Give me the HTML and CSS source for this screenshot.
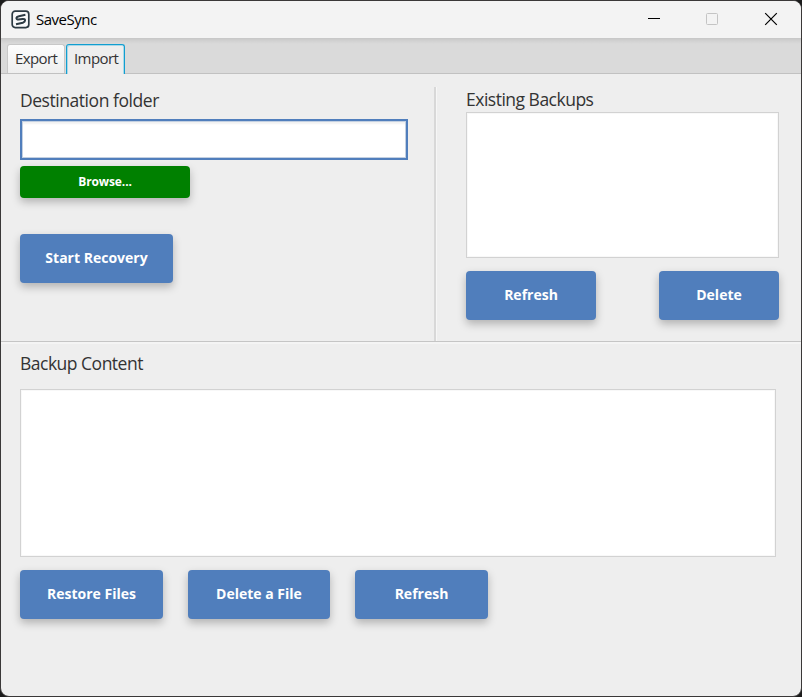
FILE: index.html
```html
<!DOCTYPE html>
<html lang="en">
<head>
<meta charset="utf-8">
<title>SaveSync</title>
<link rel="stylesheet" href="styles.css">
</head>
<body>
<div class="window">
  <header class="titlebar">
    <svg class="logo" width="20" height="20" viewBox="0 0 20 20" fill="none" stroke="#2c3a43">
      <rect x="1.2" y="1.2" width="16.6" height="16.4" rx="3" stroke-width="1.7" fill="#f8f9fa"/>
      <path d="M14.4 4.8 8 6.2C4.6 7 4.6 9.6 7.6 9.5l4-.6c3.2-.3 3.3 2.6.2 3.8L5 14.3" stroke-width="2"/>
    </svg>
    <span class="title"><span class="t-app">SaveSync</span></span>
    <div class="controls">
      <svg width="14" height="14" viewBox="0 0 14 14"><path d="M1 6.5h12" stroke="#000"/></svg>
      <svg width="14" height="14" viewBox="0 0 14 14"><rect x="1.5" y="1.5" width="11" height="11" rx="1" fill="none" stroke="#c4c4c4"/></svg>
      <svg width="14" height="14" viewBox="0 0 14 14"><path d="M1.2 1.2l11.6 11.6M12.8 1.2L1.2 12.8" stroke="#000" stroke-width="1.2"/></svg>
    </div>
  </header>
  <nav class="tabs">
    <div class="tab"><span class="t-export">Export</span></div>
    <div class="tab active"><span class="t-import">Import</span></div>
  </nav>
  <main>
    <div class="top">
      <section class="recovery">
        <h2><span class="t-dest">Destination folder</span></h2>
        <input class="field" type="text" aria-label="Destination folder">
        <button class="btn browse"><span class="t-browse">Browse...</span></button>
        <button class="btn start"><span class="t-start">Start Recovery</span></button>
      </section>
      <section class="backups">
        <h2><span class="t-exist">Existing Backups</span></h2>
        <div class="list"></div>
        <div class="row">
          <button class="btn w130"><span class="t-refresh">Refresh</span></button>
          <button class="btn w120"><span class="t-delete">Delete</span></button>
        </div>
      </section>
    </div>
    <section class="content">
      <h2><span class="t-content">Backup Content</span></h2>
      <div class="list"></div>
      <div class="row">
        <button class="btn w143"><span class="t-restore">Restore Files</span></button>
        <button class="btn w142"><span class="t-file">Delete a File</span></button>
        <button class="btn w133"><span class="t-refresh">Refresh</span></button>
      </div>
    </section>
  </main>
</div>
</body>
</html>
```
FILE: styles.css
```css
* { box-sizing: border-box; }
body {
  margin: 0;
  background: #1c1c1c;
  font-family: "Open Sans", "Noto Sans", sans-serif;
  color: #333;
}
.window {
  width: 802px;
  height: 697px;
  border: 1px solid #3a3838;
  border-radius: 9px;
  background: #eeeeee;
  overflow: hidden;
}
.titlebar {
  height: 37px;
  display: flex;
  align-items: center;
  padding: 0 23px 1px 10px;
  background: #f3f3f3;
}
.logo { margin-right: 5px; margin-top: 1px; }
.title { font-size: 15px; color: #000; line-height: 20px; margin-top: -1px; }
.controls { margin-left: auto; display: flex; gap: 44px; }
.controls svg { display: block; }
.controls svg:last-child { margin-left: 1px; }
.tabs {
  height: 36px;
  display: flex;
  align-items: flex-end;
  gap: 1px;
  padding-left: 6px;
  background: linear-gradient(#c6c6c6 0, #d2d2d2 3px, #dadada 6px);
  border-bottom: 1px solid #c1c1c1;
}
.tab {
  width: 58px;
  height: 29px;
  border: 1px solid #c8c8c8;
  border-bottom: 0;
  border-radius: 3px 3px 0 0;
  background: linear-gradient(#fdfdfd, #eeeeee);
  font-size: 15px;
  line-height: 27px;
  padding-left: 7px;
}
.tab.active {
  height: 30px;
  width: 59px;
  margin-bottom: -1px;
  border: 1px solid #119ed0;
  border-bottom: 0;
  background: #eeeeee;
  box-shadow: inset 1px 1px #a9d8e8, inset -1px 0 #a9d8e8;
  padding-left: 7px;
}
h2 { margin: 0; font-size: 17.5px; font-weight: 400; line-height: 24px; }
span { white-space: nowrap; }
.top {
  height: 268px;
  display: flex;
  border-bottom: 1px solid #c5c5c5;
  box-shadow: 0 2px 0 #f4f4f4;
}
.recovery {
  width: 433px;
  padding: 14px 0 0 19px;
  display: flex;
  flex-direction: column;
  align-items: flex-start;
}
.field {
  width: 388px;
  height: 41px;
  margin: 7px 0 6px;
  border: 2px solid #507ebc;
  background: #fff;
  box-shadow: inset 0 0 0 1px #c3d0e1, inset 0 3px 2px #f2f2f2;
  outline: 0;
}
.backups {
  width: 366px;
  margin-top: 13px;
  padding: 0 21px 0 30px;
  border-left: 2px solid #d8d8d8;
  box-shadow: inset 1px 0 #f6f6f6;
}
.list {
  border: 1px solid #d2d2d2;
  background: #fff;
  box-shadow: inset 0 0 0 1px #f8f8f8;
}
.backups .list { width: 313px; height: 146px; margin-top: 1px; }
.backups .row { width: 313px; display: flex; justify-content: space-between; margin-top: 13px; }
.btn {
  height: 49px;
  padding: 0 0 2px;
  border: 0;
  border-radius: 4px;
  background: #507ebc;
  color: #fff;
  font: bold 14px "Open Sans", "Noto Sans", sans-serif;
  box-shadow: 0 4px 8px rgba(0, 0, 0, .25);
}
.browse { width: 170px; height: 32px; font-size: 12px; background: #008000; }
.start { width: 153px; margin-top: 36px; }
.w130 { width: 130px; }
.w120 { width: 120px; }
.w143 { width: 143px; }
.w142 { width: 142px; }
.w133 { width: 133px; }
.content { padding: 9px 0 0 19px; }
.content .list { width: 756px; height: 168px; margin-top: 14px; }
.content .row { display: flex; gap: 25px; margin-top: 13px; }
.t-app { letter-spacing: -.5px; }
.t-export, .t-import { letter-spacing: -.6px; }
.t-dest { letter-spacing: -.45px; }
.t-exist, .t-content { letter-spacing: -.5px; }
.t-browse { letter-spacing: -.1px; }
.t-start, .t-refresh, .t-delete, .t-restore, .t-file { letter-spacing: 0; }
```
